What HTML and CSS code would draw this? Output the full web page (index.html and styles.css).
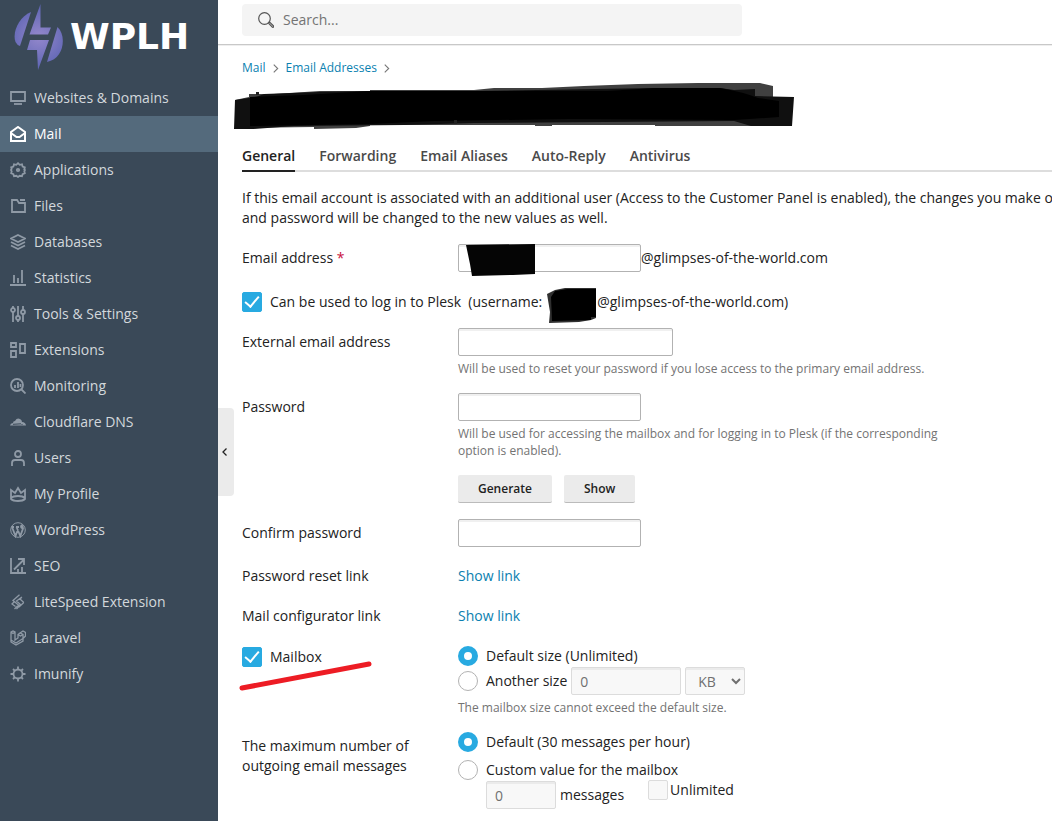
FILE: index.html
```
<!DOCTYPE html>
<html lang="en">
<head>
<meta charset="utf-8">
<title>Email Address</title>
<link rel="stylesheet" href="styles.css">
</head>
<body>
<div class="layout">
  <aside class="sidebar">
    <div class="brand">
      <svg class="brand-mark" viewBox="0 0 50 66" aria-hidden="true">
        <defs><radialGradient id="mark" gradientUnits="userSpaceOnUse" cx="25" cy="33" r="32"><stop offset="0" stop-color="#9488cc"/><stop offset="1" stop-color="#5e65b4"/></radialGradient></defs>
        <g fill="url(#mark)">
          <path d="M17 8C5 13-2 28 1.500 38Q3 41 6 42Z"/>
          <path d="M26.500 0V23.500H37L34 30.500H15.500Z"/>
          <path d="M16 36H35L24 66L23 46H13Z"/>
          <path d="M43.500 23C53 32 50 55 33 58Z"/>
        </g>
      </svg>
      <span class="brand-name">WPLH</span>
    </div>
    <nav>
      <ul class="nav">
        <li><a href="#"><svg class="icon" viewBox="0 0 16 16"><path d="M1 2h14v9H1z"/><path d="M4 14h8"/></svg>Websites &amp; Domains</a></li>
        <li><a href="#" class="active"><svg class="icon" viewBox="0 0 16 16"><path d="M1 6v9h14V6L8 1z"/><path d="M1 7l5.500 4h3L15 7"/></svg>Mail</a></li>
        <li><a href="#"><svg class="icon" viewBox="0 0 16 16"><path d="M8 1.200l1.700 1.600 2.300-.5.600 2.200 2.200.8-.5 2.300L15 8l-.7 1.300.5 2-2.200.9-.6 2-2.300-.4L8 15l-1.700-1.200-2.300.4-.6-2-2.200-.9.500-2L1 8l.7-1.400-.5-1.300 2.200-.8.600-2.200 2.300.5z"/><circle cx="8" cy="8" r="1.200"/></svg>Applications</a></li>
        <li><a href="#"><svg class="icon" viewBox="0 0 16 16"><path d="M2 2v12h13V5H9L7 2zM10 2h5"/></svg>Files</a></li>
        <li><a href="#"><svg class="icon" viewBox="0 0 16 16"><path d="M8 1l7 3.500L8 8 1 4.500zM1 8l7 3.500L15 8M1 11.500L8 15l7-3.500"/></svg>Databases</a></li>
        <li><a href="#"><svg class="icon" viewBox="0 0 16 16"><path d="M0 15h16M4 5v8M8 8v5M12 0v13"/></svg>Statistics</a></li>
        <li><a href="#"><svg class="icon" viewBox="0 0 16 16"><circle cx="3" cy="4" r="2"/><circle cx="8" cy="12" r="2"/><circle cx="13" cy="6" r="2"/><path d="M3 0v2M3 6v10M8 0v10M8 14v2M13 0v4M13 8v8"/></svg>Tools &amp; Settings</a></li>
        <li><a href="#"><svg class="icon" viewBox="0 0 16 16"><path d="M1 1h5v4H1zM1 9h5v6H1zM10 2h5v9h-5z"/></svg>Extensions</a></li>
        <li><a href="#"><svg class="icon" viewBox="0 0 16 16"><circle cx="7" cy="7" r="6"/><path d="M5 7v3M8 4v6M10.500 6v3M11 11l4.500 4.500"/></svg>Monitoring</a></li>
        <li><a href="#"><svg class="icon icon-solid" viewBox="0 0 16 16"><path d="M0 11.500Q.3 9 3 9Q3 7 5 7Q7 3.500 10 5Q12 6 12 8Q15.500 8 16 11.500z"/><path class="cut" d="M3 10.300l8-.5M12.500 10l-1 1"/></svg>Cloudflare DNS</a></li>
        <li><a href="#"><svg class="icon" viewBox="0 0 16 16"><circle cx="8" cy="4" r="3"/><path d="M2 16v-3q0-3 3-3h6q3 0 3 3v3"/></svg>Users</a></li>
        <li><a href="#"><svg class="icon" viewBox="0 0 16 16"><path d="M1 4v9q2 2 7 2t7-2V4l-4 3-3-5-3 5zM1 12q2-2 7-2t7 2"/></svg>My Profile</a></li>
        <li><a href="#"><svg class="icon" viewBox="0 0 16 16"><circle cx="8" cy="8" r="7.300" stroke-width="1"/><path d="M2 5l3.500 9L8 7.500M6.500 5l3.800 9L13 6.500q0-1.500-1-3M1.500 5H4M6 5h3M12 3q-2 1 0 3.500"/></svg>WordPress</a></li>
        <li><a href="#"><svg class="icon" viewBox="0 0 16 16"><path d="M1 0v15h15M4 11.500L13.500 2M8 1h6v6M8 15v-4M12 15V9"/></svg>SEO</a></li>
        <li><a href="#"><svg class="icon icon-fine" viewBox="0 0 16 16"><path d="M9.500.8L3 6.500l5.500 4.500-4 4M12 3L6.500 7l4 3.500-4 4.700M4 8L2 10l3.500 2.500M13.800 8.500L10 5l1.500-1.500M13.800 8.500L9 13"/></svg>LiteSpeed Extension</a></li>
        <li><a href="#"><svg class="icon icon-fine" viewBox="0 0 16 16"><path d="M1 2l2-1 2 1v8l3-2V4.500L10 3l3 1.500v4L6 13l-5-3zM10 3l3-2 2.500 1.500V6L13 8.500M1 10v2l5 3 7-4V8M8 4.500l2.500 1.500L13 4.500M1 2l2 1.500 2-1.500"/></svg>Laravel</a></li>
        <li><a href="#"><svg class="icon" viewBox="0 0 16 16"><circle cx="8" cy="8" r="4.500"/><path d="M8 .5v3M8 12.500v3M.5 8h3M12.500 8h3M3 3l2 2M11 11l2 2M13 3l-2 2M3 13l2-2"/></svg>Imunify</a></li>
      </ul>
    </nav>
    <button class="collapse" type="button" aria-label="Collapse sidebar"><svg viewBox="0 0 6 8"><path d="M4.500.5L1 4l3.500 3.500"/></svg></button>
  </aside>

  <div class="page">
    <header class="topbar">
      <label class="search">
        <svg viewBox="0 0 16 16" aria-hidden="true"><circle cx="6.500" cy="6.500" r="5.800"/><path d="M10.800 10.800l.8-.8 4 4q.4 1.600-1.200 1.200l-4-4"/></svg>
        <input type="search" placeholder="Search..." aria-label="Search">
      </label>
    </header>

    <main class="content">
      <nav class="crumbs" aria-label="Breadcrumb">
        <a href="#">Mail</a><svg viewBox="0 0 5 8"><path d="M.5.5L4 4 .5 7.500"/></svg>
        <a href="#">Email Addresses</a><svg viewBox="0 0 5 8"><path d="M.5.5L4 4 .5 7.500"/></svg>
      </nav>

      <h1 class="title" aria-label="Hidden address">
        <svg class="title-mask" viewBox="0 0 560 46" aria-hidden="true">
          <path fill="#404040" d="M1 17L15 14V11L40 11L86 8H136V7H240L260 5H308L350 3L404 1L464 0H526L539 3V14H558V43H421V42H318V43H301V42H136V43L122 45L80 46V44L1 45Z"/>
          <path fill="#101010" d="M1 17L22 14L30 11L86 9L136 8H240L420 5H486L500 7L521 6V13L560 14L558 43H517L500 38L240 40L170 42L60 43L20 46H0Z"/>
          <path fill="#000" d="M16 14L70 12L136 8H374L420 5H486Q509 9 524 15L545 18V34L500 37L335 36L200 38L136 41L16 43Z"/>
          <path fill="#222" d="M22 9h3v3h-3zM220 37h3v4h-3z"/>
        </svg>
      </h1>

      <ul class="tabs">
        <li><a href="#" class="current">General</a></li>
        <li><a href="#">Forwarding</a></li>
        <li><a href="#">Email Aliases</a></li>
        <li><a href="#">Auto-Reply</a></li>
        <li><a href="#">Antivirus</a></li>
      </ul>

      <p class="intro">If this email account is associated with an additional user (Access to the Customer Panel is enabled), the changes you make on<br>and password will be changed to the new values as well.</p>

      <form class="form">
        <div class="row">
          <label class="label" for="email">Email address <span class="required">*</span></label>
          <div class="field line">
            <span class="masked"><input class="text medium" id="email" type="text"><svg class="email-mask" viewBox="0 0 70 32" aria-hidden="true"><path d="M0 1L69 0V30L47 31L6 32L4 20Z" fill="#050505"/></svg></span><span>@glimpses-of-the-world.com</span>
          </div>
        </div>

        <div class="row login">
          <label class="choice"><input type="checkbox" class="check" checked><span>Can be used to log in to Plesk&nbsp; (username:</span></label>
          <span class="user-mask"><svg viewBox="0 0 50 36" aria-hidden="true"><path fill="#303030" d="M0 6L8 2L18 0H49V30L44 32L32 34L2 35L3 24Z"/><path fill="#000" d="M4 9L8 3L20 1H49V29H44V32L5 33Z"/></svg></span><span>@glimpses-of-the-world.com)</span>
        </div>

        <div class="row">
          <label class="label" for="external">External email address</label>
          <div class="field">
            <input class="text wide" id="external" type="email">
            <p class="hint">Will be used to reset your password if you lose access to the primary email address.</p>
          </div>
        </div>

        <div class="row">
          <label class="label" for="password">Password</label>
          <div class="field">
            <input class="text medium" id="password" type="password">
            <p class="hint">Will be used for accessing the mailbox and for logging in to Plesk (if the corresponding option is enabled).</p>
            <div class="buttons"><button type="button">Generate</button><button type="button">Show</button></div>
          </div>
        </div>

        <div class="row">
          <label class="label" for="confirm">Confirm password</label>
          <div class="field"><input class="text medium" id="confirm" type="password"></div>
        </div>

        <div class="row link-row"><span class="label">Password reset link</span><div class="field"><a href="#">Show link</a></div></div>
        <div class="row link-row"><span class="label">Mail configurator link</span><div class="field"><a href="#">Show link</a></div></div>

        <div class="row mailbox">
          <div class="label">
            <label class="choice"><input type="checkbox" class="check" checked><span>Mailbox</span></label>
            <svg class="marker" viewBox="0 0 134 32" aria-hidden="true"><path d="M3 28L130 4"/></svg>
          </div>
          <div class="field">
            <label class="choice"><input type="radio" class="radio" name="size" checked><span>Default size (Unlimited)</span></label>
            <div class="line">
              <label class="choice"><input type="radio" class="radio" name="size"><span>Another size</span></label>
              <input class="text size" type="text" value="0" aria-label="Mailbox size" disabled>
              <select class="unit" aria-label="Unit" disabled><option>KB</option><option>MB</option><option>GB</option></select>
            </div>
            <p class="hint">The mailbox size cannot exceed the default size.</p>
          </div>
        </div>

        <div class="row">
          <span class="label">The maximum number of outgoing email messages</span>
          <div class="field">
            <div class="stack">
              <label class="choice"><input type="radio" class="radio" name="limit" checked><span>Default (30 messages per hour)</span></label>
              <label class="choice"><input type="radio" class="radio" name="limit"><span>Custom value for the mailbox</span></label>
            </div>
            <div class="line custom">
              <input class="text count" id="count" type="text" value="0" disabled>
              <label for="count">messages</label>
              <label class="choice unlimited"><input type="checkbox" class="check" disabled><span>Unlimited</span></label>
            </div>
          </div>
        </div>
      </form>
    </main>
  </div>
</div>
</body>
</html>
```

FILE: styles.css
```
* { box-sizing: border-box; }

body {
  margin: 0;
  font: 14px/20px "Open Sans", "Noto Sans", sans-serif;
  color: #222;
  background: #fff;
}

a { color: #0a7fb0; text-decoration: none; }
ul { list-style: none; margin: 0; padding: 0; }
p { margin: 0; }
svg { display: block; fill: none; }
input, select, button { font: inherit; color: inherit; margin: 0; }

.layout { display: flex; min-height: 100vh; }

/* Sidebar */
.sidebar {
  position: relative;
  flex: 0 0 218px;
  background: #3a4958;
}

.brand {
  display: flex;
  align-items: center;
  gap: 6px;
  height: 80px;
  padding: 0 0 6px 14px;
}

.brand-mark { width: 50px; height: 66px; }

.brand-name {
  font: bold 36px/40px "DejaVu Sans", sans-serif;
  color: #fff;
}

.nav a {
  display: flex;
  align-items: center;
  gap: 8px;
  height: 36px;
  padding: 0 10px;
  font-weight: 500;
  color: #d3d8dc;
}

.nav .active { background: #546a7c; color: #fff; }

.icon {
  width: 16px;
  height: 16px;
  stroke: #8f9aa6;
  stroke-width: 1.8;
}

.active .icon { stroke: #fff; stroke-width: 2; }
.icon-fine { stroke-width: 1.3; }
.icon-solid { fill: #8f9aa6; stroke: none; }
.icon-solid .cut { stroke: #3a4958; stroke-width: 1; }

.collapse {
  position: absolute;
  left: 100%;
  top: 408px;
  display: flex;
  align-items: center;
  width: 16px;
  height: 88px;
  padding: 0 4px;
  border: 0;
  border-radius: 0 4px 4px 0;
  background: #ebebeb;
}

.collapse svg { width: 6px; height: 8px; stroke: #222; stroke-width: 1.3; }

/* Top bar */
.page { flex: 1; min-width: 0; overflow: hidden; }

.topbar {
  padding: 4px 24px 8px;
  border-bottom: 1px solid #c8c8c8;
  box-shadow: 0 1px 0 #eee;
}

.search {
  display: flex;
  align-items: center;
  gap: 9px;
  max-width: 500px;
  height: 32px;
  padding: 0 16px;
  border-radius: 4px;
  background: #f4f4f4;
}

.search svg { width: 16px; height: 16px; stroke: #555; stroke-width: 1.2; }

.search input {
  flex: 1;
  padding: 0;
  border: 0;
  outline: 0;
  background: none;
}

.search input::placeholder { color: #737373; opacity: 1; }

/* Page heading */
.content { padding: 13px 0 10px 24px; }

.crumbs {
  display: flex;
  align-items: center;
  gap: 7px;
  font-size: 12px;
}

.crumbs svg { width: 6px; height: 9px; stroke: #777; }

.title {
  position: relative;
  height: 46px;
  margin: 5px 0 17px;
}

.title-mask {
  position: absolute;
  left: -8px;
  top: 0;
  width: 560px;
  height: 46px;
}

.tabs {
  display: flex;
  gap: 24px;
  border-bottom: 2px solid #ddd;
}

.tabs a {
  display: block;
  margin-bottom: -2px;
  padding-bottom: 4px;
  border-bottom: 2px solid transparent;
  font-weight: 600;
  color: #4a4a4a;
}

.tabs .current { color: #222; border-color: #222; }

.intro { margin: 16px 0; white-space: nowrap; }

/* Form */
.form { display: flex; flex-direction: column; gap: 16px; }
.row { display: flex; }
.label { position: relative; flex: 0 0 216px; padding: 4px 40px 0 0; }
.field { flex: 1; }
.line { display: flex; align-items: center; }
.required { color: #c8103c; }

.text {
  display: block;
  height: 28px;
  padding: 0 8px;
  border: 1px solid #b2b2b2;
  border-radius: 2px;
  background: #fff;
  box-shadow: inset 0 2px 0 #f0f0f0;
}

.medium { width: 183px; }
.wide { width: 215px; }

.text:disabled, .unit:disabled {
  border-color: #dcdcdc;
  background: #f8f8f8;
  box-shadow: inset 0 2px 0 #ebebeb;
  color: #707070;
  opacity: 1;
}

.hint {
  max-width: 500px;
  padding-top: 4px;
  font-size: 12px;
  line-height: 17px;
  color: #737373;
}

.masked { position: relative; }
.email-mask { position: absolute; left: 8px; top: 0; width: 70px; height: 32px; }

.login { align-items: center; padding-top: 4px; }
.user-mask { position: relative; width: 55px; height: 20px; }
.user-mask svg { position: absolute; left: 5px; top: -4px; width: 50px; height: 36px; }

.choice { display: flex; align-items: center; gap: 8px; height: 20px; white-space: nowrap; }

.check, .radio {
  appearance: none;
  flex: none;
  width: 20px;
  height: 20px;
  border: 1px solid #b2b2b2;
  background: #fff;
}

.check { border-radius: 2px; }
.radio { border-radius: 50%; }
.radio:checked { border: 6px solid #28aae1; }

.check:checked {
  display: grid;
  place-items: center;
  border-color: #28aae1;
  background: #28aae1;
}

.check:checked::before {
  content: "";
  width: 6px;
  height: 12px;
  margin-bottom: 4px;
  border: solid #fff;
  border-width: 0 2px 2px 0;
  transform: rotate(40deg);
}

.check:disabled { border-color: #dcdcdc; background: #f8f8f8; }

.buttons { display: flex; gap: 12px; padding-top: 16px; }

.buttons button {
  height: 28px;
  padding: 0 20px;
  border: 0;
  border-bottom: 1px solid #bbb;
  border-radius: 2px;
  background: #ebebeb;
  font-size: 12px;
  font-weight: 600;
}

.link-row { padding: 3px 0 1px; }
.link-row .label { padding-top: 0; }

.mailbox { padding-top: 3px; }
.mailbox .label { padding-top: 1px; }
.mailbox .line { gap: 4px; padding-top: 1px; }

.marker {
  position: absolute;
  left: -3px;
  top: 14px;
  width: 134px;
  height: 32px;
  stroke: #ed1c24;
  stroke-width: 5;
  stroke-linecap: round;
}

.size { width: 110px; }
.unit { width: 60px; height: 28px; padding: 0 0 0 8px; border: 1px solid; border-radius: 2px; }

.stack { display: flex; flex-direction: column; gap: 8px; }
.custom { gap: 4px; padding: 1px 0 0 28px; }
.count { width: 70px; }
.unlimited { gap: 2px; margin: -10px 0 0 20px; }
```
